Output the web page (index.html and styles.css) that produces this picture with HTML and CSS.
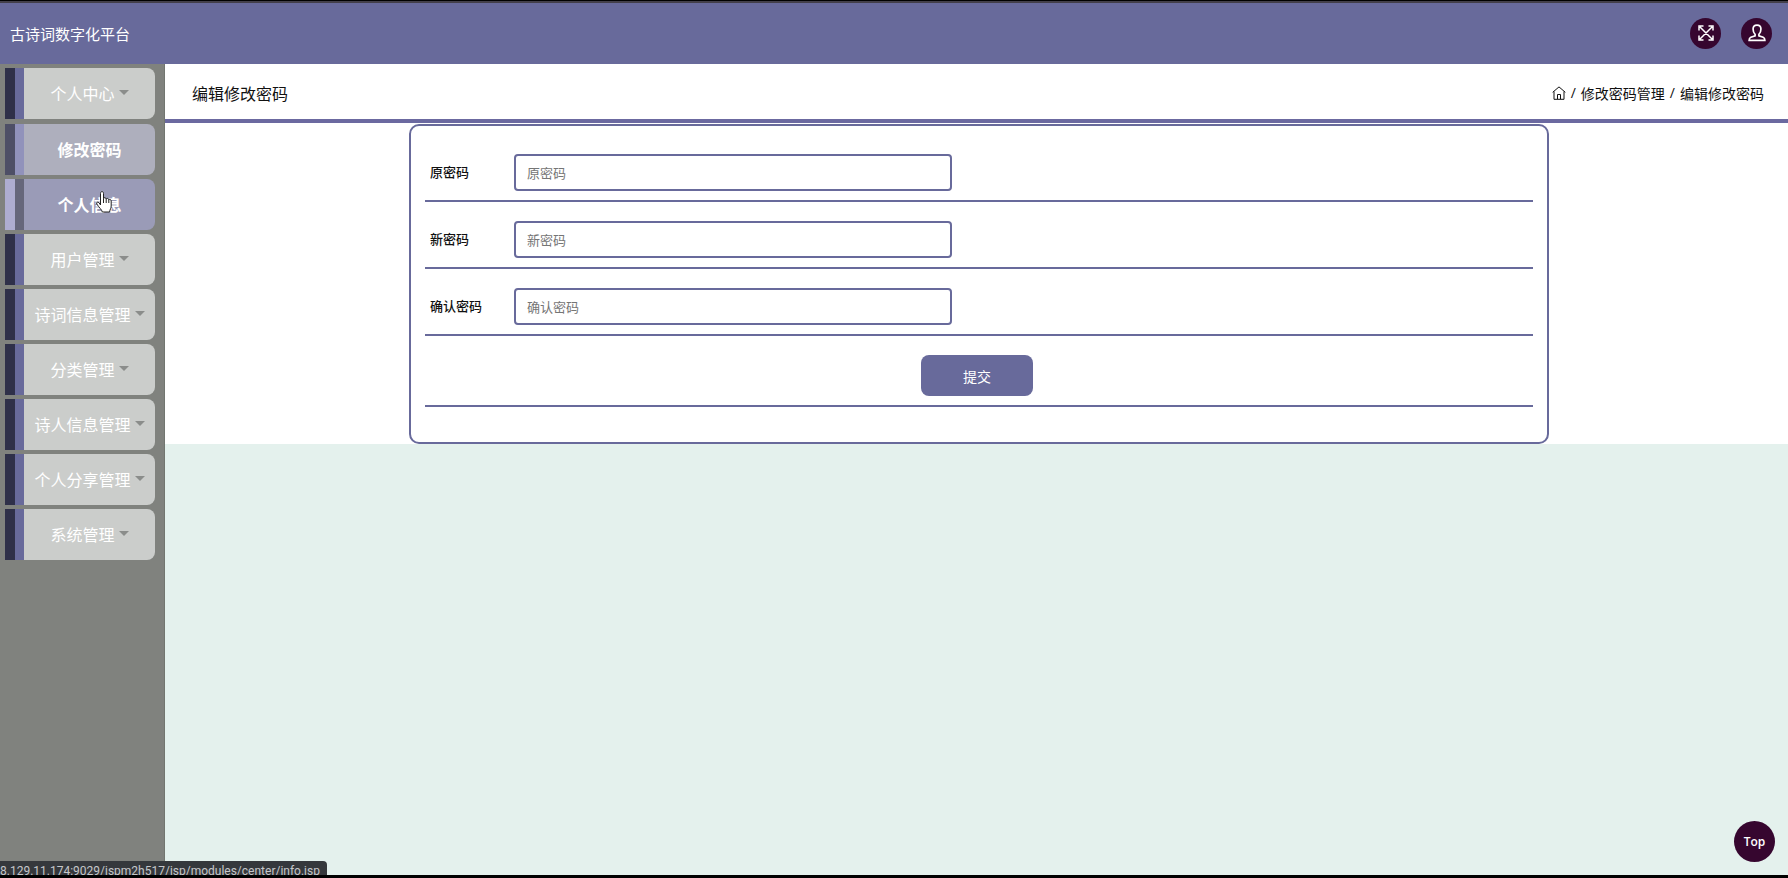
FILE: index.html
```html
<!DOCTYPE html>
<html lang="zh-CN">
<head>
<meta charset="utf-8">
<title>古诗词数字化平台</title>
<link rel="stylesheet" href="styles.css">
</head>
<body>
<header class="topbar">
  <span class="brand">古诗词数字化平台</span>
  <div class="actions">
    <button class="round" type="button" aria-label="全屏">
      <svg viewBox="0 0 16 16" width="16" height="16"><path d="M2 2l12 12M14 2L2 14M1 5.500V1h4.500M10.500 1H15v4.500M15 10.500V15h-4.500M5.500 15H1v-4.500"/></svg>
    </button>
    <button class="round" type="button" aria-label="用户">
      <svg viewBox="0 0 16 16" width="18" height="18"><path d="M6.300 9.200C5 8 4.500 6.500 4.500 4.500 4.500 2.300 6 1 8 1s3.500 1.300 3.500 3.500c0 2-.5 3.500-1.800 4.700v1.300l3.800 1.300c1 .4 1.500 1.200 1.500 2.700H1c0-1.500.5-2.300 1.500-2.700l3.800-1.300z"/></svg>
    </button>
  </div>
</header>
<div class="layout">
  <nav class="sidebar">
    <ul class="menu">
      <li><button class="item" type="button">个人中心<i class="caret"></i></button>
        <ul class="submenu">
          <li><a class="item sub" href="#password">修改密码</a></li>
          <li><a class="item sub hovered" href="#info">个人信息</a></li>
        </ul>
      </li>
      <li><button class="item" type="button">用户管理<i class="caret"></i></button></li>
      <li><button class="item" type="button">诗词信息管理<i class="caret"></i></button></li>
      <li><button class="item" type="button">分类管理<i class="caret"></i></button></li>
      <li><button class="item" type="button">诗人信息管理<i class="caret"></i></button></li>
      <li><button class="item" type="button">个人分享管理<i class="caret"></i></button></li>
      <li><button class="item" type="button">系统管理<i class="caret"></i></button></li>
    </ul>
  </nav>
  <main class="main">
    <div class="pagehead">
      <h1 class="title">编辑修改密码</h1>
      <div class="crumbs">
        <a href="#home" aria-label="首页"><svg viewBox="0 0 14 14" width="14" height="14"><path d="M.7 6.300L7 .9l6.300 5.400M2 5.500v7.800h10V5.500M5.500 13V8.500h3V13"/></svg></a>
        <span>/</span><span>修改密码管理</span><span>/</span><span>编辑修改密码</span>
      </div>
    </div>
    <div class="panel">
      <form class="card">
        <div class="row"><label for="old">原密码</label><input id="old" type="password" placeholder="原密码"></div>
        <div class="row"><label for="new">新密码</label><input id="new" type="password" placeholder="新密码"></div>
        <div class="row"><label for="again">确认密码</label><input id="again" type="password" placeholder="确认密码"></div>
        <div class="row center"><button class="submit" type="button">提交</button></div>
      </form>
    </div>
  </main>
</div>
<button class="totop" type="button">Top</button>
<div class="status">8.129.11.174:9029/jspm2h517/jsp/modules/center/info.jsp</div>
<div class="bottomline"></div>
<svg class="cursor" viewBox="0 0 18 24" width="18" height="24"><path d="M5.500 15V3.500c0-2.600 3-2.600 3 0v5c.4-1.200 2.600-1 2.700.5.500-1 2.500-.8 2.600.8.700-.8 2.400-.4 2.400 1.200v5c0 2-1.200 3-1.600 6H7.300c-.5-2.500-3-4-5.500-8-.9-1.600 1-2.700 2.200-1.300zM8.500 8.500V13M11.200 9v4M13.800 9.800V13"/></svg>
</body>
</html>
```
FILE: styles.css
```css
* { box-sizing: border-box; }
body {
  margin: 0;
  min-height: 100vh;
  display: flex;
  flex-direction: column;
  background: #e4f1ed;
  color: #111;
  font-family: "Open Sans", "Noto Sans CJK SC", sans-serif;
  font-size: 14px;
}
button, input { font: inherit; }
ul { list-style: none; margin: 0; padding: 0; }
svg { display: block; fill: none; stroke: currentColor; }

.topbar {
  height: 64px;
  padding: 1px 16px 0 10px;
  border-top: 1px solid #000;
  box-shadow: inset 0 2px #433f49;
  background-color: #686a9b;
  color: #fff;
  display: flex;
  align-items: center;
  justify-content: space-between;
}
.brand { font-size: 15px; }
.actions { display: flex; gap: 20px; }
.round {
  width: 31px;
  height: 31px;
  padding: 0;
  border: 0;
  border-radius: 50%;
  background: #36062f;
  color: #fff;
  display: grid;
  place-items: center;
}
.round svg { stroke-width: 1.5; }

.layout { flex: 1; display: flex; }
.sidebar { width: 165px; flex: none; background: #80827e; padding: 4px 9px 0 5px; border-right: 1px solid #727670; }
.menu { display: flex; flex-direction: column; gap: 4px; }
.submenu { display: flex; flex-direction: column; gap: 4px; margin-top: 5px; }
.item {
  width: 100%;
  height: 51px;
  padding: 0 0 2px 19px;
  border: 0;
  border-radius: 0 8px 8px 0;
  background: linear-gradient(to right, #2f3049 10px, #686a9b 10px 19px, #cbcdcb 19px);
  color: #fff;
  font-size: 16px;
  text-decoration: none;
  display: flex;
  align-items: center;
  justify-content: center;
}
.caret {
  margin-left: 4px;
  border: 5px solid transparent;
  border-top-color: #8b8d8b;
  border-bottom: 0;
}
.sub {
  font-weight: 700;
  background: linear-gradient(to right, #4e4f66 10px, #9192bb 10px 19px, #aeafbd 19px);
}
.hovered { background: linear-gradient(to right, #aeadd0 10px, #66677b 10px 19px, #9a9bb7 19px); }

.main { flex: 1; min-width: 0; }
.pagehead {
  height: 59px;
  padding: 2px 24px 0 27px;
  background: #fff;
  border-bottom: 4px solid #6b69a0;
  display: flex;
  align-items: center;
  justify-content: space-between;
}
.title { margin: 0; font-size: 16px; font-weight: 400; }
.crumbs { display: flex; align-items: center; gap: 5px; }
.crumbs a { color: #111; }
.panel { background: #fff; padding: 1px 0 0 5px; }
.card {
  max-width: 1140px;
  margin: 0 auto;
  padding: 28px 14px 35px;
  border: 2px solid #686a9b;
  border-radius: 10px;
}
.row {
  display: flex;
  align-items: center;
  padding: 0 5px 9px;
  border-bottom: 2px solid #686a9b;
}
.row + .row { margin-top: 19px; }
.row label { width: 84px; padding-bottom: 2px; font-size: 13px; font-weight: 500; }
.row input {
  width: 438px;
  height: 37px;
  padding: 0 11px;
  border: 2px solid #686a9b;
  border-radius: 4px;
  font-size: 13px;
  background: #fff;
}
.row input::placeholder { color: #757575; }
.row.center { justify-content: center; padding-right: 9px; }
.submit {
  width: 112px;
  height: 41px;
  border: 0;
  border-radius: 8px;
  background: #686a9b;
  color: #fff;
}
.totop {
  position: fixed;
  right: 13px;
  bottom: 16px;
  width: 41px;
  height: 41px;
  padding: 0;
  border: 0;
  border-radius: 50%;
  background: #36062f;
  color: #fff;
  font-size: 12px;
  font-weight: 600;
}
.status {
  position: fixed;
  left: 0;
  bottom: 0;
  height: 17px;
  padding: 0 7px 0 0;
  overflow: hidden;
  border-radius: 0 4px 0 0;
  background: #35383c;
  color: #c5c7ca;
  font-family: Roboto, sans-serif;
  font-size: 12px;
  line-height: 20px;
}
.bottomline { position: fixed; left: 0; right: 0; bottom: 0; height: 3px; background: #000; }
.cursor { position: absolute; left: 95px; top: 190px; fill: #fff; stroke: #222; stroke-width: 1; }
```
